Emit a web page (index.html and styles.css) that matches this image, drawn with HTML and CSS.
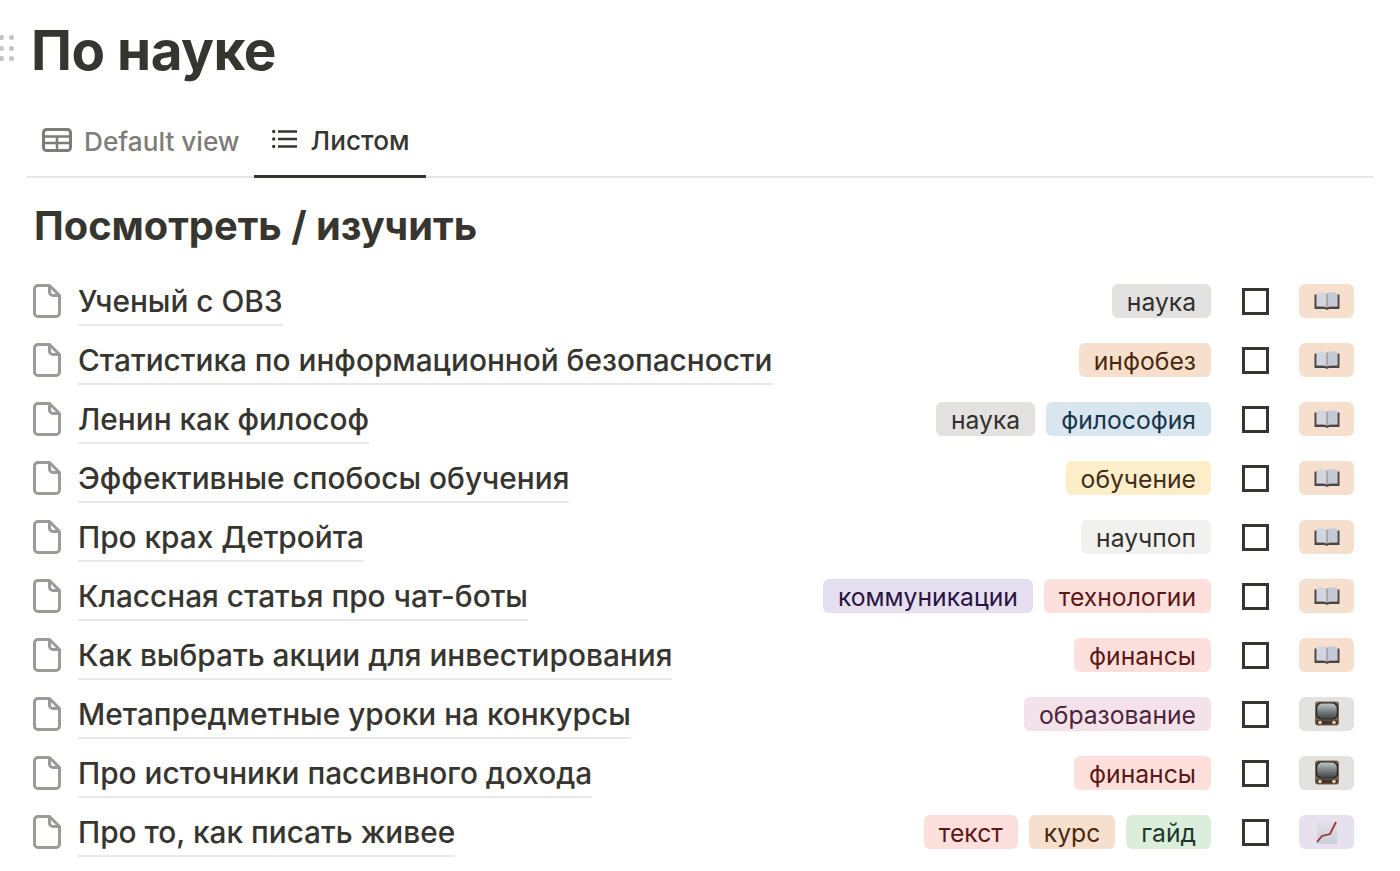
FILE: index.html
```html
<!DOCTYPE html>
<html lang="en">
<head>
    <meta charset="UTF-8">
    <meta name="viewport" content="width=device-width, initial-scale=1.0">
    <title>По науке</title>
    <link rel="stylesheet" href="styles.css">
</head>
<body>
    <svg class="sprites" width="0" height="0">
        <defs>
            <linearGradient id="screen" x1="0" y1="0" x2="0" y2="1">
                <stop offset="0" stop-color="#c0c6c6"/>
                <stop offset="0.55" stop-color="#747c7d"/>
                <stop offset="1" stop-color="#454a4b"/>
            </linearGradient>
            <linearGradient id="paper" x1="0" y1="0" x2="0" y2="1">
                <stop offset="0" stop-color="#e0e2e8"/>
                <stop offset="1" stop-color="#c9cdd6"/>
            </linearGradient>
        </defs>
        <symbol id="page" viewBox="0 0 28 34">
            <path d="M5 1.500h11.500L26.500 11.500V29a3.500 3.500 0 0 1-3.500 3.500H5A3.500 3.500 0 0 1 1.500 29V5A3.500 3.500 0 0 1 5 1.500z" fill="none" stroke="#9b9a97" stroke-width="3" stroke-linejoin="round"/>
            <path d="M16.500 1.500V8a3.500 3.500 0 0 0 3.500 3.500h6.500" fill="none" stroke="#9b9a97" stroke-width="3" stroke-linejoin="round"/>
        </symbol>
        <symbol id="book" viewBox="0 0 26 18">
            <path d="M0.500 2.500h2v12h8l2.500 1 2.500-1h8v-12h2V17H15l-2 1-2-1H.5z" fill="#47474c"/>
            <path d="M3 1c3-1 6.500-1 9.500.6V15C9.500 13.600 6 13.500 3 14z" fill="#d2d6e1"/>
            <path d="M23 1c-3-1-6.500-1-9.500.6V15c3-1.400 6.500-1.500 9.500-1z" fill="#c4c9d6"/>
            <path d="M12.500 1.600h1V15.500h-1z" fill="#77787f"/>
        </symbol>
        <symbol id="tv" viewBox="0 0 26 25">
            <rect x="1" y="0.500" width="24" height="24" rx="3" fill="#7a6351"/>
            <rect x="2" y="1.500" width="22" height="17" rx="5" fill="#26282a"/>
            <rect x="3.200" y="2.500" width="19.600" height="15" rx="5" fill="url(#screen)"/>
            <rect x="2.500" y="19.500" width="21" height="4" fill="#40342b"/>
            <circle cx="6" cy="21.500" r="1.800" fill="#e4cfae"/>
            <circle cx="20" cy="21.500" r="1.800" fill="#e4cfae"/>
        </symbol>
        <symbol id="chart" viewBox="0 0 24 24">
            <rect x="2" y="1" width="20" height="23" fill="url(#paper)"/>
            <path d="M2 22l5-6 8-2 6-12" fill="none" stroke="#a32f3a" stroke-width="1.800"/>
        </symbol>
    </svg>

    <div class="page">
        <div class="title-row">
            <div class="grip">
                <span></span><span></span><span></span><span></span><span></span><span></span>
            </div>
            <h1>По науке</h1>
        </div>

        <div class="tabs">
            <div class="tab">
                <svg class="tab-icon" viewBox="0 0 30 24">
                    <rect x="1.500" y="1.500" width="27" height="21" rx="3" fill="none" stroke="#7d7c78" stroke-width="3"/>
                    <path d="M1.500 8.500h27M1.500 15h27M15 8.500v14" fill="none" stroke="#7d7c78" stroke-width="2.500"/>
                </svg>
                Default view
            </div>
            <div class="tab active">
                <svg class="list-icon" viewBox="0 0 25 20">
                    <path d="M6 2.500h19M6 10h19M6 17.500h19" stroke="#37352f" stroke-width="2.500"/>
                    <circle cx="1.700" cy="2.500" r="1.700" fill="#37352f"/>
                    <circle cx="1.700" cy="10" r="1.700" fill="#37352f"/>
                    <circle cx="1.700" cy="17.500" r="1.700" fill="#37352f"/>
                </svg>
                Листом
            </div>
        </div>

        <h2>Посмотреть / изучить</h2>

        <div class="list">
            <div class="row">
                <svg class="page-icon"><use href="#page"/></svg>
                <span class="name">Ученый с ОВЗ</span>
                <div class="tags"><span class="tag gray">наука</span></div>
                <span class="check"></span>
                <span class="kind orange"><svg class="book"><use href="#book"/></svg></span>
            </div>
            <div class="row">
                <svg class="page-icon"><use href="#page"/></svg>
                <span class="name">Статистика по информационной безопасности</span>
                <div class="tags"><span class="tag orange">инфобез</span></div>
                <span class="check"></span>
                <span class="kind orange"><svg class="book"><use href="#book"/></svg></span>
            </div>
            <div class="row">
                <svg class="page-icon"><use href="#page"/></svg>
                <span class="name">Ленин как философ</span>
                <div class="tags"><span class="tag gray">наука</span><span class="tag blue">философия</span></div>
                <span class="check"></span>
                <span class="kind orange"><svg class="book"><use href="#book"/></svg></span>
            </div>
            <div class="row">
                <svg class="page-icon"><use href="#page"/></svg>
                <span class="name">Эффективные спобосы обучения</span>
                <div class="tags"><span class="tag yellow">обучение</span></div>
                <span class="check"></span>
                <span class="kind orange"><svg class="book"><use href="#book"/></svg></span>
            </div>
            <div class="row">
                <svg class="page-icon"><use href="#page"/></svg>
                <span class="name">Про крах Детройта</span>
                <div class="tags"><span class="tag light">научпоп</span></div>
                <span class="check"></span>
                <span class="kind orange"><svg class="book"><use href="#book"/></svg></span>
            </div>
            <div class="row">
                <svg class="page-icon"><use href="#page"/></svg>
                <span class="name">Классная статья про чат-боты</span>
                <div class="tags"><span class="tag purple">коммуникации</span><span class="tag red">технологии</span></div>
                <span class="check"></span>
                <span class="kind orange"><svg class="book"><use href="#book"/></svg></span>
            </div>
            <div class="row">
                <svg class="page-icon"><use href="#page"/></svg>
                <span class="name">Как выбрать акции для инвестирования</span>
                <div class="tags"><span class="tag red">финансы</span></div>
                <span class="check"></span>
                <span class="kind orange"><svg class="book"><use href="#book"/></svg></span>
            </div>
            <div class="row">
                <svg class="page-icon"><use href="#page"/></svg>
                <span class="name">Метапредметные уроки на конкурсы</span>
                <div class="tags"><span class="tag pink">образование</span></div>
                <span class="check"></span>
                <span class="kind gray"><svg class="tv"><use href="#tv"/></svg></span>
            </div>
            <div class="row">
                <svg class="page-icon"><use href="#page"/></svg>
                <span class="name">Про источники пассивного дохода</span>
                <div class="tags"><span class="tag red">финансы</span></div>
                <span class="check"></span>
                <span class="kind gray"><svg class="tv"><use href="#tv"/></svg></span>
            </div>
            <div class="row">
                <svg class="page-icon"><use href="#page"/></svg>
                <span class="name">Про то, как писать живее</span>
                <div class="tags"><span class="tag red">текст</span><span class="tag orange">курс</span><span class="tag green">гайд</span></div>
                <span class="check"></span>
                <span class="kind purple"><svg class="chart"><use href="#chart"/></svg></span>
            </div>
        </div>
    </div>
</body>
</html>
```

FILE: styles.css
```css
body {
    font-family: Inter, "Noto Sans", sans-serif;
    background-color: white;
    color: #37352f;
    margin: 0;
    overflow: hidden;
}
.sprites {
    display: block;
}
.page {
    padding: 0 27px;
}
.title-row {
    position: relative;
    padding: 18px 0 0 4px;
}
.grip {
    position: absolute;
    left: -28px;
    top: 35px;
    display: grid;
    grid-template-columns: 5px 5px;
    gap: 5.500px 4.500px;
}
.grip span {
    width: 5px;
    height: 5px;
    border-radius: 50%;
    background-color: #c4c4c2;
}
h1 {
    font-size: 54.800px;
    line-height: 64px;
    font-weight: 700;
    letter-spacing: -0.5px;
    margin: 0;
}
.tabs {
    display: flex;
    margin-top: 24px;
    border-bottom: 2px solid #e6e6e5;
    height: 72px;
    box-sizing: border-box;
}
.tab {
    display: flex;
    align-items: center;
    gap: 12px;
    padding: 0 14px 2px 15px;
    font-size: 26.200px;
    font-weight: 500;
    color: #7d7c78;
    height: 72px;
    box-sizing: border-box;
}
.tab.active {
    color: #37352f;
    border-bottom: 3px solid #37352f;
    gap: 14px;
    padding: 0 17px 0 18px;
}
.tab-icon {
    width: 30px;
    height: 24px;
    margin-top: -2px;
}
.list-icon {
    width: 25px;
    height: 20px;
    margin-top: -3px;
}
h2 {
    font-size: 39.800px;
    line-height: 46px;
    font-weight: 700;
    margin: 25px 0 0 7px;
}
.list {
    margin-top: 22px;
    display: flex;
    flex-direction: column;
}
.row {
    display: flex;
    align-items: center;
    height: 59px;
    padding-right: 19px;
}
.page-icon {
    width: 28px;
    height: 34px;
    margin-left: 6px;
    margin-right: 17px;
    margin-top: 1px;
    flex-shrink: 0;
}
.name {
    font-size: 29.800px;
    font-weight: 500;
    line-height: 38px;
    padding-bottom: 4px;
    border-bottom: 2px solid #e9e9e8;
    margin-top: 6px;
}
.tags {
    display: flex;
    gap: 11px;
    margin-left: auto;
}
.tag {
    font-size: 24.700px;
    line-height: 34px;
    height: 34px;
    padding: 1px 15px 0;
    box-sizing: border-box;
    border-radius: 6px;
}
.tag.gray { background-color: #e3e2e0; color: #32302c; }
.tag.orange { background-color: #f7dfcd; color: #49290e; }
.tag.blue { background-color: #d8e6f0; color: #183347; }
.tag.yellow { background-color: #fbeec8; color: #402c1b; }
.tag.light { background-color: #f1f1ef; color: #32302c; }
.tag.purple { background-color: #e6dfef; color: #29133f; }
.tag.red { background-color: #fde0dc; color: #5d1715; }
.tag.pink { background-color: #f3e2ea; color: #4c2337; }
.tag.green { background-color: #dbeddb; color: #1c3829; }
.check {
    width: 27px;
    height: 27px;
    box-sizing: border-box;
    border: 3px solid #37352f;
    margin-top: 2px;
    margin-left: 31px;
    margin-right: 30px;
    flex-shrink: 0;
}
.kind {
    width: 55px;
    height: 34px;
    border-radius: 6px;
    display: flex;
    align-items: center;
    justify-content: center;
    flex-shrink: 0;
}
.kind.orange { background-color: #f7dfcd; }
.kind.gray { background-color: #e3e2e0; }
.kind.purple { background-color: #e6e0ef; }
.book {
    width: 26px;
    height: 18px;
}
.tv {
    width: 26px;
    height: 25px;
}
.chart {
    width: 24px;
    height: 24px;
}
```
